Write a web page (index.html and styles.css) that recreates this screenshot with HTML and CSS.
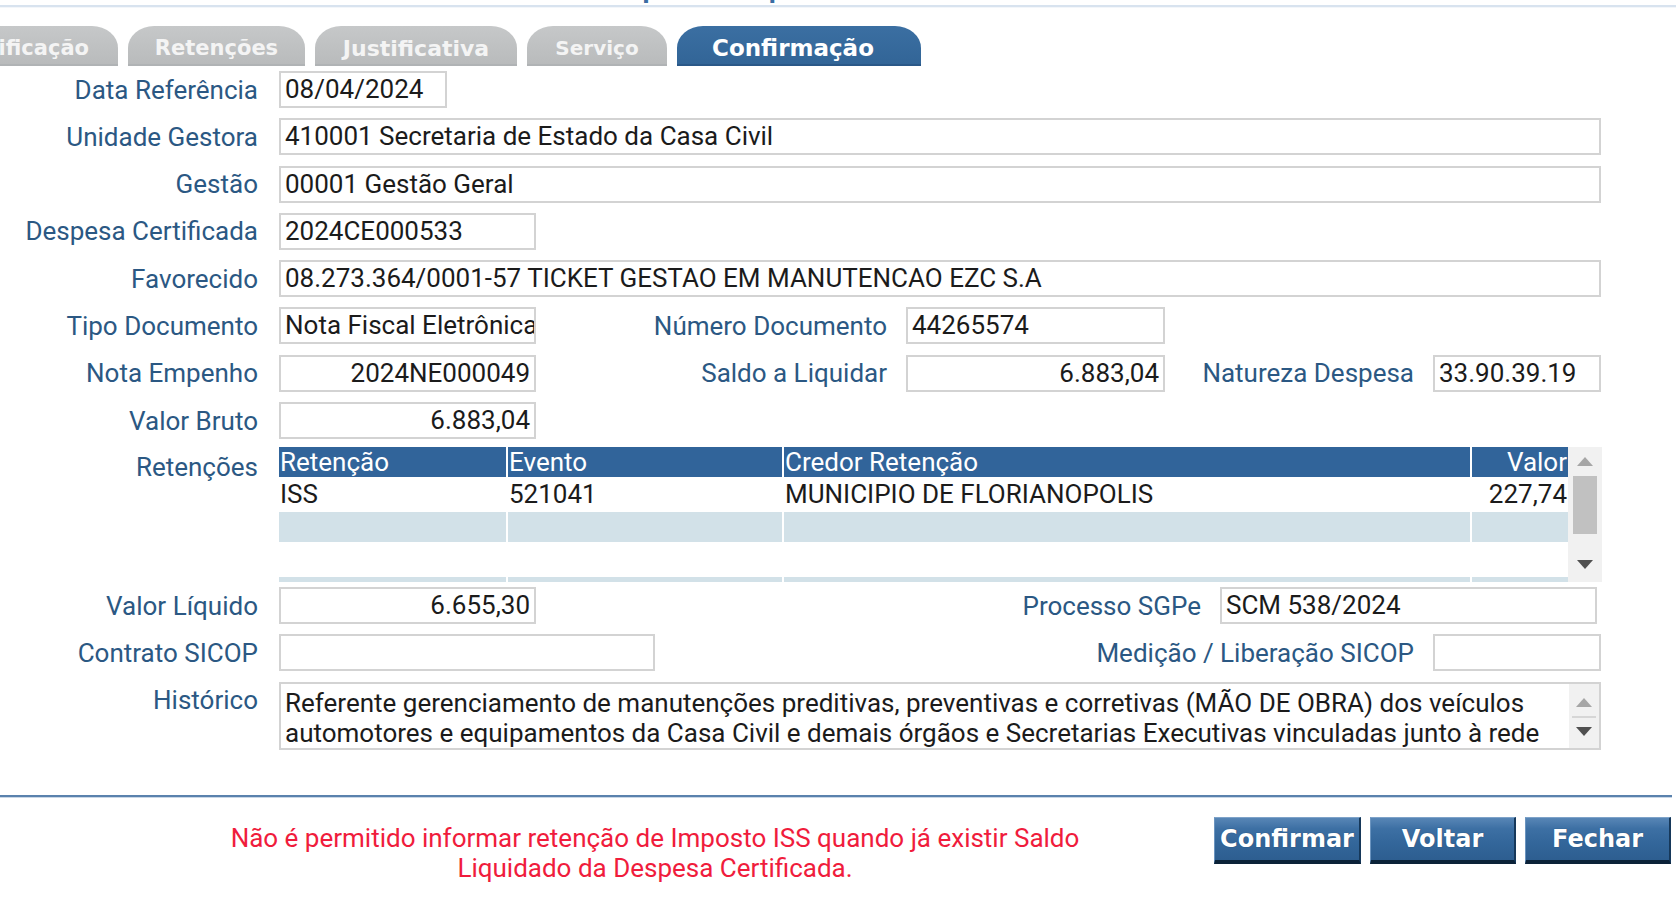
FILE: index.html
```html
<!DOCTYPE html>
<html lang="pt-BR">
<head>
<meta charset="utf-8">
<title>Liquidar Despesa Certificada</title>
<link rel="stylesheet" href="styles.css">
</head>
<body>
<div class="titlebar"><div class="title">Liquidar Despesa Certificada</div></div>

<div class="tabs">
  <div class="tab first">ificação</div>
  <div class="tab t2">Retenções</div>
  <div class="tab t3">Justificativa</div>
  <div class="tab t4">Serviço</div>
  <div class="tab t5 active">Confirmação</div>
</div>

<div class="form">
  <div class="row r-first">
    <div class="lbl l-main">Data Referência</div>
    <div class="fld f-date">08/04/2024</div>
  </div>
  <div class="row">
    <div class="lbl l-main">Unidade Gestora</div>
    <div class="fld f-wide">410001 Secretaria de Estado da Casa Civil</div>
  </div>
  <div class="row">
    <div class="lbl l-main">Gestão</div>
    <div class="fld f-wide">00001 Gestão Geral</div>
  </div>
  <div class="row">
    <div class="lbl l-main">Despesa Certificada</div>
    <div class="fld f-mid">2024CE000533</div>
  </div>
  <div class="row">
    <div class="lbl l-main">Favorecido</div>
    <div class="fld f-wide">08.273.364/0001-57 TICKET GESTAO EM MANUTENCAO EZC S.A</div>
  </div>
  <div class="row">
    <div class="lbl l-main">Tipo Documento</div>
    <div class="fld f-mid">Nota Fiscal Eletrônica</div>
    <div class="lbl l-doc">Número Documento</div>
    <div class="fld f-doc">44265574</div>
  </div>
  <div class="row">
    <div class="lbl l-main">Nota Empenho</div>
    <div class="fld f-mid num">2024NE000049</div>
    <div class="lbl l-doc">Saldo a Liquidar</div>
    <div class="fld f-doc num">6.883,04</div>
    <div class="lbl l-nat">Natureza Despesa</div>
    <div class="fld f-sm">33.90.39.19</div>
  </div>
  <div class="row">
    <div class="lbl l-main">Valor Bruto</div>
    <div class="fld f-mid num">6.883,04</div>
  </div>

  <div class="row grid-row">
    <div class="lbl l-main l-top">Retenções</div>
    <div class="grid-box">
      <div class="grid">
        <div class="gh">Retenção</div>
        <div class="gh">Evento</div>
        <div class="gh">Credor Retenção</div>
        <div class="gh right">Valor</div>

        <div class="gc">ISS</div>
        <div class="gc">521041</div>
        <div class="gc">MUNICIPIO DE FLORIANOPOLIS</div>
        <div class="gc right">227,74</div>

        <div class="gc alt"></div>
        <div class="gc alt"></div>
        <div class="gc alt"></div>
        <div class="gc alt"></div>

        <div class="gc"></div>
        <div class="gc"></div>
        <div class="gc"></div>
        <div class="gc"></div>

        <div class="gc alt"></div>
        <div class="gc alt"></div>
        <div class="gc alt"></div>
        <div class="gc alt"></div>
      </div>
      <div class="vscroll">
        <svg class="arr" width="16" height="9" viewBox="0 0 16 9"><path d="M8 0 L16 9 L0 9 Z" fill="#a6a6a6"/></svg>
        <div class="thumb"></div>
        <div class="spacer"></div>
        <svg class="arr" width="16" height="9" viewBox="0 0 16 9"><path d="M0 0 L16 0 L8 9 Z" fill="#505050"/></svg>
      </div>
    </div>
  </div>

  <div class="row r-vl">
    <div class="lbl l-main">Valor Líquido</div>
    <div class="fld f-mid num">6.655,30</div>
    <div class="lbl l-proc">Processo SGPe</div>
    <div class="fld f-proc">SCM 538/2024</div>
  </div>
  <div class="row">
    <div class="lbl l-main">Contrato SICOP</div>
    <div class="fld f-contr"></div>
    <div class="lbl l-med">Medição / Liberação SICOP</div>
    <div class="fld f-sm"></div>
  </div>
  <div class="row r-hist">
    <div class="lbl l-main l-top2">Histórico</div>
    <div class="memo">
      <div class="memo-text">Referente gerenciamento de manutenções preditivas, preventivas e corretivas (MÃO DE OBRA) dos veículos<br>automotores e equipamentos da Casa Civil e demais órgãos e Secretarias Executivas vinculadas junto à rede</div>
      <div class="memo-scroll">
        <svg class="arr" width="16" height="9" viewBox="0 0 16 9"><path d="M8 0 L16 9 L0 9 Z" fill="#a6a6a6"/></svg>
        <div class="memo-sep"></div>
        <svg class="arr" width="16" height="9" viewBox="0 0 16 9"><path d="M0 0 L16 0 L8 9 Z" fill="#505050"/></svg>
      </div>
    </div>
  </div>
</div>

<div class="sep"></div>
<div class="footer">
  <div class="msg">Não é permitido informar retenção de Imposto ISS quando já existir Saldo<br>Liquidado da Despesa Certificada.</div>
  <div class="buttons">
    <button class="btn b1">Confirmar</button>
    <button class="btn b2">Voltar</button>
    <button class="btn b3">Fechar</button>
  </div>
</div>
</body>
</html>
```

FILE: styles.css
```css
html, body {
  margin: 0;
  padding: 0;
  background: #ffffff;
}
body {
  width: 1676px;
  height: 913px;
  overflow: hidden;
  font-family: Roboto, "Liberation Sans", Arial, sans-serif;
}

/* cut-off window title */
.titlebar {
  height: 8px;
  overflow: hidden;
  background: linear-gradient(#ffffff 0, #ffffff 5px, #d8e3ef 5px, #d8e3ef 7px, #f3f6fa 7px);
}
.title {
  font: bold 22px "DejaVu Sans", Verdana, sans-serif;
  line-height: 22px;
  color: #3a6da3;
  text-align: center;
  margin-top: -19px;
  padding-right: 94px;
}

/* tabs */
.tabs {
  display: flex;
  gap: 10px;
  margin-top: 18px;
  height: 40px;
}
.tab {
  flex: none;
  height: 40px;
  box-sizing: border-box;
  display: flex;
  align-items: center;
  justify-content: center;
  padding-top: 6px;
  font: bold 21px "DejaVu Sans", Verdana, sans-serif;
  color: #f4f4f4;
  background: linear-gradient(#c6c8c9, #b9bbbc);
  border-radius: 26px 26px 0 0 / 22px 22px 0 0;
  border-bottom: 2px solid #b0b3b5;
}
.tab.first {
  width: 118px;
  border-top-left-radius: 0;
  justify-content: flex-end;
  padding-right: 29px;
}
.tab.t2 { width: 177px; }
.tab.t3 { width: 202px; font-size: 22px; }
.tab.t4 { width: 140px; font-size: 20px; }
.tab.t5 { width: 244px; padding-right: 12px; font-size: 23px; }
.tab.active {
  color: #ffffff;
  background: linear-gradient(#3b6fa2, #326597);
  border-bottom: 2px solid #2a5888;
}

/* form */
.form {
  display: flex;
  flex-direction: column;
}
.row {
  display: flex;
  align-items: center;
  height: 37px;
  margin-top: 10.3px;
}
.row.r-first { margin-top: 5px; }
.lbl {
  flex: none;
  box-sizing: border-box;
  text-align: right;
  color: #2b5883;
  font-size: 26px;
  white-space: nowrap;
}
.l-main { width: 258px; margin-right: 21px; }
.l-doc { width: 351px; margin-right: 19px; }
.l-nat { width: 249px; margin-right: 19px; }
.l-proc { width: 665px; margin-right: 19px; }
.l-med { width: 759px; margin-right: 19px; }

.fld {
  flex: none;
  box-sizing: border-box;
  height: 37px;
  border: 2px solid #d3d3d3;
  padding: 0 4px;
  font-size: 26px;
  line-height: 33px;
  color: #1b1b1b;
  white-space: nowrap;
  overflow: hidden;
  background: #ffffff;
}
.fld.num { text-align: right; }
.f-date { width: 168px; }
.f-wide { width: 1322px; }
.f-mid { width: 257px; }
.f-doc { width: 259px; }
.f-sm { width: 168px; }
.f-proc { width: 377px; }
.f-contr { width: 376px; }

/* retenções grid */
.grid-row {
  height: 135px;
  align-items: flex-start;
  margin-top: 8px;
}
.l-top { padding-top: 5px; }
.grid-box {
  display: flex;
  height: 135px;
  overflow: hidden;
}
.grid {
  width: 1289px;
  display: grid;
  grid-template-columns: 227px 274px 686px 96px;
  grid-template-rows: 30px 33px 30px 33px 30px;
  column-gap: 2px;
  row-gap: 1px;
  background: #ffffff;
}
.gh {
  background: #31649a;
  color: #ffffff;
  font-size: 26px;
  line-height: 30px;
  padding-left: 1px;
  white-space: nowrap;
  overflow: hidden;
}
.gc {
  font-size: 26px;
  line-height: 33px;
  color: #1b1b1b;
  padding-left: 1px;
  white-space: nowrap;
  background: #ffffff;
}
.gc.alt { background: #d2e1e8; }
.right { text-align: right; padding-left: 0; padding-right: 1px; }

.vscroll {
  width: 34px;
  margin-top: -2px;
  height: 137px;
  background: #f1f1f1;
  display: flex;
  flex-direction: column;
  align-items: center;
  box-sizing: border-box;
  padding: 12px 0 13px;
}
.arr { flex: none; display: block; }
.thumb {
  width: 24px;
  height: 58px;
  margin-top: 10px;
  background: #c1c1c1;
}
.spacer { flex: 1; }

.row.r-vl { margin-top: 5px; }

/* histórico memo */
.row.r-hist {
  height: 68px;
  align-items: flex-start;
  margin-top: 11px;
}
.l-top2 { padding-top: 3px; }
.memo {
  width: 1322px;
  height: 68px;
  box-sizing: border-box;
  border: 2px solid #d3d3d3;
  display: flex;
}
.memo-text {
  flex: 1;
  padding: 4px 0 0 4px;
  font-size: 26px;
  line-height: 30px;
  color: #1b1b1b;
  white-space: nowrap;
  overflow: hidden;
}
.memo-scroll {
  width: 30px;
  background: #f1f1f1;
  display: flex;
  flex-direction: column;
  align-items: center;
  box-sizing: border-box;
  padding-top: 14px;
}
.memo-sep {
  width: 24px;
  height: 2px;
  background: #d6d6d6;
  margin: 9px 0 9px;
}

/* footer */
.sep {
  width: 1672px;
  height: 3px;
  margin-top: 45px;
  background: linear-gradient(#5a82ad 0, #5a82ad 2px, #c9d7e6 2px);
}
.footer {
  width: 1672px;
  display: flex;
  align-items: flex-start;
}
.msg {
  flex: none;
  width: 990px;
  margin-left: 160px;
  margin-top: 25px;
  text-align: center;
  color: #f01c3c;
  font-size: 26px;
  line-height: 30px;
}
.buttons {
  display: flex;
  gap: 9px;
  margin-left: 64px;
  margin-top: 19px;
}
.btn {
  flex: none;
  height: 47px;
  width: 147px;
  box-sizing: border-box;
  padding: 0;
  font: bold 24px "DejaVu Sans", Verdana, sans-serif;
  color: #ffffff;
  text-shadow: 0 0 1px #1b3d60;
  background: linear-gradient(#5886b6 0, #3d70a4 25%, #33669a 60%, #2d5e90 100%);
  border-top: 1px solid #7ea3c9;
  border-left: 1px solid #6b94bf;
  border-right: 2px solid #16385a;
  border-bottom: 4px solid #0b2238;
}
.btn.b2, .btn.b3 { width: 146px; }
```
